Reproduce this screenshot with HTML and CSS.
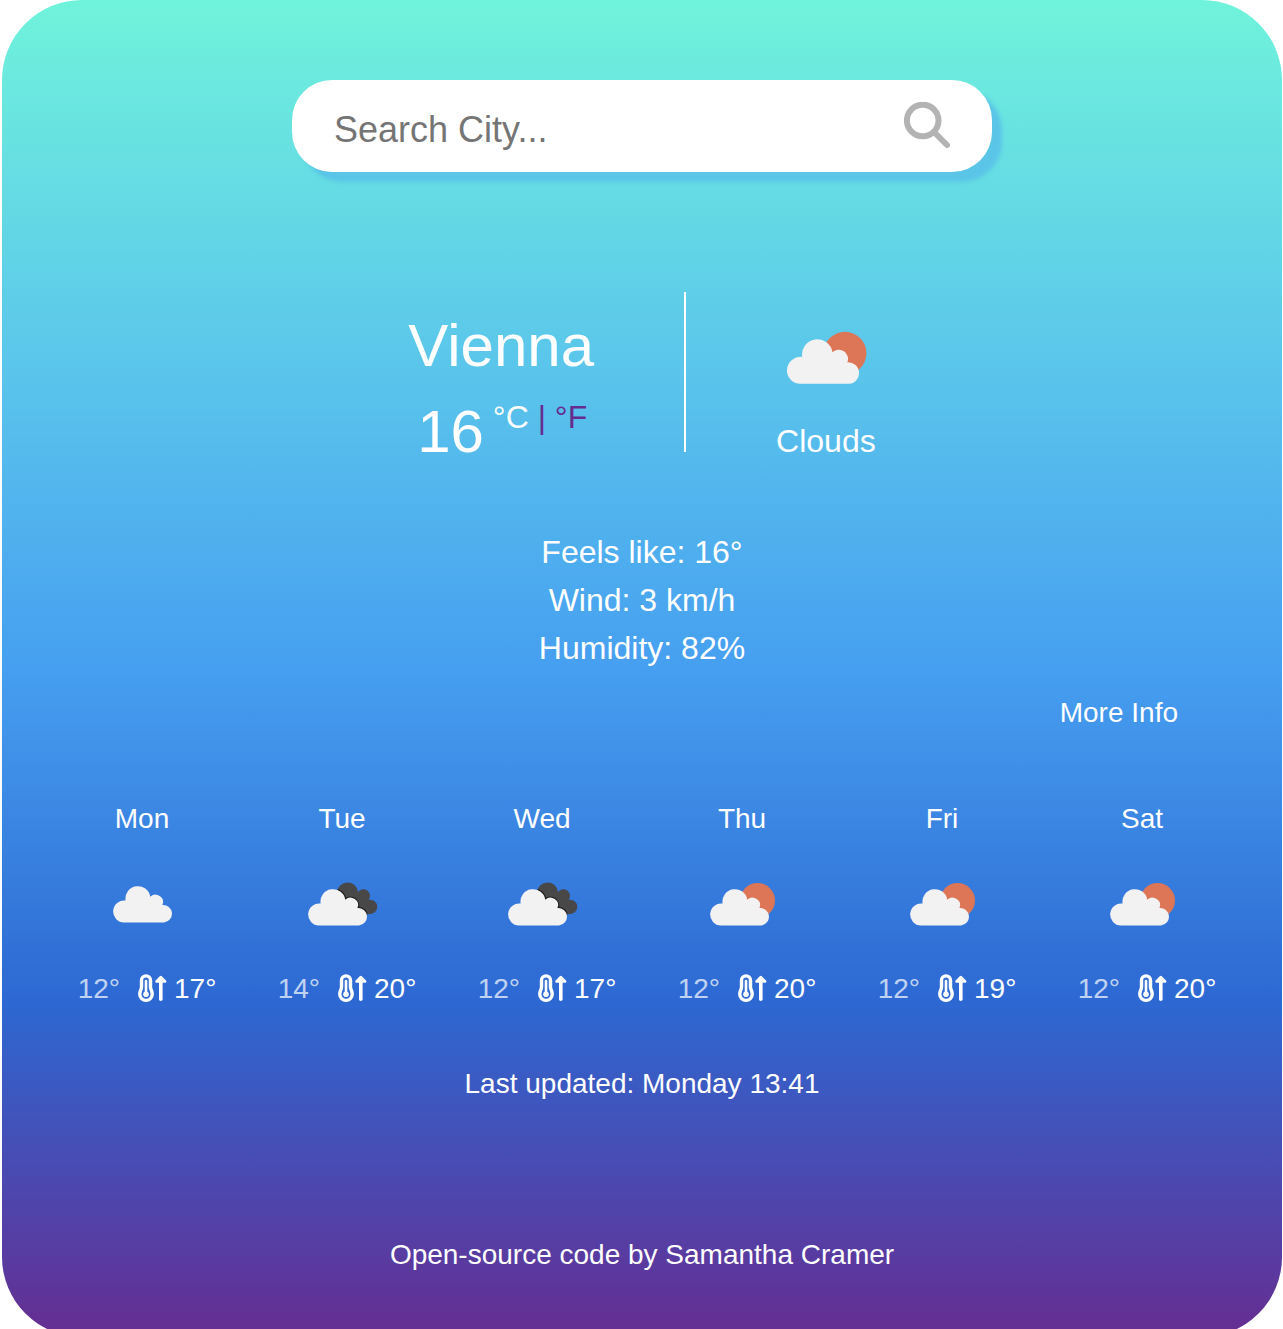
FILE: index.html
```html
<!DOCTYPE html>
<html lang="en">
<head>
<meta charset="utf-8">
<meta name="viewport" content="width=device-width, initial-scale=1">
<title>Weather in Vienna</title>
<link rel="stylesheet" href="styles.css">
</head>
<body>
<svg class="sprite" aria-hidden="true">
  <clipPath id="rear-clip">
    <path d="M35 14A10.500 10.500 0 0 1 56 12A6.300 6.300 0 0 1 66.800 19.800A7.200 7.200 0 1 1 67 34L50 36L36 22Z"/>
  </clipPath>
  <symbol id="cloud" viewBox="0 0 60 38">
    <path d="M11 37.500A11 11 0 1 1 12.600 15.600A12.500 12.500 0 1 1 37.300 11.700A7.500 7.500 0 0 1 49.400 20A8.750 8.750 0 0 1 51 37.500Z"/>
  </symbol>
  <symbol id="clouds" viewBox="0 0 80 48">
    <use href="#cloud" x="11" y="5" width="60" height="38" fill="#f2f2f2"/>
  </symbol>
  <symbol id="sunny" viewBox="0 0 80 48">
    <circle cx="55.500" cy="20.500" r="17.500" fill="#dd7656"/>
    <use href="#cloud" x="8" y="8" width="60" height="38" fill="#f2f2f2"/>
  </symbol>
  <symbol id="overcast" viewBox="0 0 80 48">
    <path d="M35 14A10.500 10.500 0 0 1 56 12A6.300 6.300 0 0 1 66.800 19.800A7.200 7.200 0 1 1 67 34L50 36L36 22Z" fill="#484849"/>
    <g clip-path="url(#rear-clip)">
      <use href="#cloud" x="6" y="8" width="60" height="38" stroke="#222" stroke-width="2.500"/>
    </g>
    <use href="#cloud" x="6" y="8" width="60" height="38" fill="#f2f2f2"/>
  </symbol>
  <symbol id="thermo" viewBox="0 0 30 30">
    <path d="M3.500 7.400a4.500 4.500 0 0 1 9 0V14.500C12.500 16.500 14.200 17.500 14.200 21.200a6.200 6.200 0 0 1-12.400 0C1.800 17.500 3.500 16.500 3.500 14.500Z" fill="none" stroke="#fff" stroke-width="3.400"/>
    <path d="M8 8V20" stroke="#fff" stroke-width="2.600" stroke-linecap="round"/>
    <circle cx="8" cy="21.200" r="2.800" fill="#fff"/>
    <path d="M22.800 7V26.200" stroke="#fff" stroke-width="3.600" stroke-linecap="round"/>
    <path d="M22.800 4.200L27 8.400H18.600Z" fill="#fff" stroke="#fff" stroke-width="2.800" stroke-linejoin="round"/>
  </symbol>
</svg>
<div class="page">
  <main class="card">
    <form class="search">
      <input class="search-input" type="text" placeholder="Search City..." aria-label="Search city">
      <button class="search-button" type="button" aria-label="Search">
        <svg width="48" height="48" viewBox="0 0 48 48" fill="none" stroke="#b3b3b3" stroke-linecap="round"><circle cx="18.700" cy="18.500" r="15.800" stroke-width="6"/><path d="M31 31L43 43" stroke-width="6"/></svg>
      </button>
    </form>

    <section class="current">
      <div class="place">
        <h1 class="city">Vienna</h1>
        <div class="temp">16<sup class="units"> °C <a class="unit-link" href="#">| °F</a></sup></div>
      </div>
      <div class="divider"></div>
      <div class="sky">
        <svg class="sky-icon" role="img" aria-label="Sun behind cloud"><use href="#sunny"/></svg>
        <div class="sky-text">Clouds</div>
      </div>
    </section>

    <ul class="details">
      <li>Feels like: 16°</li>
      <li>Wind: 3 km/h</li>
      <li>Humidity: 82%</li>
    </ul>

    <button class="more" type="button">More Info</button>

    <section class="forecast">
      <div class="day"><div>Mon</div><svg class="day-icon"><use href="#clouds"/></svg><div class="range"><span class="low">12°</span><svg class="thermo"><use href="#thermo"/></svg><span>17°</span></div></div>
      <div class="day"><div>Tue</div><svg class="day-icon"><use href="#overcast"/></svg><div class="range"><span class="low">14°</span><svg class="thermo"><use href="#thermo"/></svg><span>20°</span></div></div>
      <div class="day"><div>Wed</div><svg class="day-icon"><use href="#overcast"/></svg><div class="range"><span class="low">12°</span><svg class="thermo"><use href="#thermo"/></svg><span>17°</span></div></div>
      <div class="day"><div>Thu</div><svg class="day-icon"><use href="#sunny"/></svg><div class="range"><span class="low">12°</span><svg class="thermo"><use href="#thermo"/></svg><span>20°</span></div></div>
      <div class="day"><div>Fri</div><svg class="day-icon"><use href="#sunny"/></svg><div class="range"><span class="low">12°</span><svg class="thermo"><use href="#thermo"/></svg><span>19°</span></div></div>
      <div class="day"><div>Sat</div><svg class="day-icon"><use href="#sunny"/></svg><div class="range"><span class="low">12°</span><svg class="thermo"><use href="#thermo"/></svg><span>20°</span></div></div>
    </section>

    <p class="updated">Last updated: Monday 13:41</p>
    <footer class="footer"><a class="source" href="#">Open-source code by Samantha Cramer</a></footer>
  </main>
</div>
</body>
</html>
```
FILE: styles.css
```css
* {
  box-sizing: border-box;
}

body {
  margin: 0;
  background: #fff;
  color: #fff;
  font: 28px/40px "Liberation Sans", Arial, sans-serif;
}

.sprite {
  position: absolute;
  width: 0;
  height: 0;
}

.page {
  height: 100vh;
  padding: 0 1px 0 2px;
  overflow: hidden;
}

.card {
  display: flex;
  flex-direction: column;
  align-items: center;
  min-height: calc(100vh + 8px);
  padding: 80px 40px 60px;
  border-radius: 80px;
  background: linear-gradient(180deg, #70f3db 0%, #5bc6eb 27%, #469ff0 50%, #2d68d2 75%, #662d91 100%);
}

.search {
  display: flex;
  align-items: center;
  width: 100%;
  max-width: 700px;
  height: 92px;
  padding: 0 40px 0 42px;
  border-radius: 40px;
  background: #fff;
  box-shadow: 10px 10px 4px #5bc5e8;
}

.search-input {
  flex: 1;
  min-width: 0;
  height: 80px;
  margin-top: 8px;
  padding: 0;
  border: 0;
  outline: 0;
  background: none;
  color: #333;
  font: inherit;
  font-size: 36px;
}

.search-input::placeholder {
  color: #757575;
  opacity: 1;
}

.search-button {
  display: flex;
  margin: 0;
  padding: 0;
  border: 0;
  background: none;
  cursor: pointer;
}

.current {
  display: flex;
  justify-content: center;
  gap: 90px;
  margin-top: 120px;
}

.place {
  padding-top: 10px;
  text-align: center;
}

.city {
  margin: 0;
  font-size: 60px;
  font-weight: 400;
  line-height: 88px;
}

.temp {
  padding-left: 2px;
  font-size: 60px;
  line-height: 84px;
}

.units {
  font-size: 32px;
  line-height: 1;
  vertical-align: 24px;
}

.unit-link {
  color: #662d91;
  text-decoration: none;
}

.divider {
  width: 2px;
  height: 160px;
  background: #fff;
}

.sky {
  display: flex;
  flex-direction: column;
  align-items: center;
  gap: 30px;
  padding-top: 36px;
}

.sky-icon {
  width: 98px;
  height: 59px;
}

.sky-text {
  font-size: 32px;
  line-height: 48px;
}

.details {
  margin: 54px 0 0;
  padding: 0;
  list-style: none;
  font-size: 32px;
  line-height: 48px;
  text-align: center;
}

.more {
  align-self: flex-end;
  margin: 21px 64px 0 0;
  padding: 0;
  border: 0;
  background: none;
  color: inherit;
  font: inherit;
  cursor: pointer;
}

.forecast {
  display: grid;
  grid-template-columns: repeat(6, 1fr);
  width: 100%;
  margin-top: 66px;
}

.day {
  display: flex;
  flex-direction: column;
  align-items: center;
}

.day-icon {
  width: 80px;
  height: 48px;
  margin: 41px 0;
}

.range {
  display: flex;
  align-items: center;
  padding-left: 10px;
}

.low {
  opacity: 0.7;
}

.thermo {
  width: 30px;
  height: 30px;
  margin: 0 6px 2px 18px;
}

.updated {
  margin: 55px 0 0;
}

.footer {
  margin-top: 131px;
}

.source {
  color: inherit;
  text-decoration: none;
}
```
